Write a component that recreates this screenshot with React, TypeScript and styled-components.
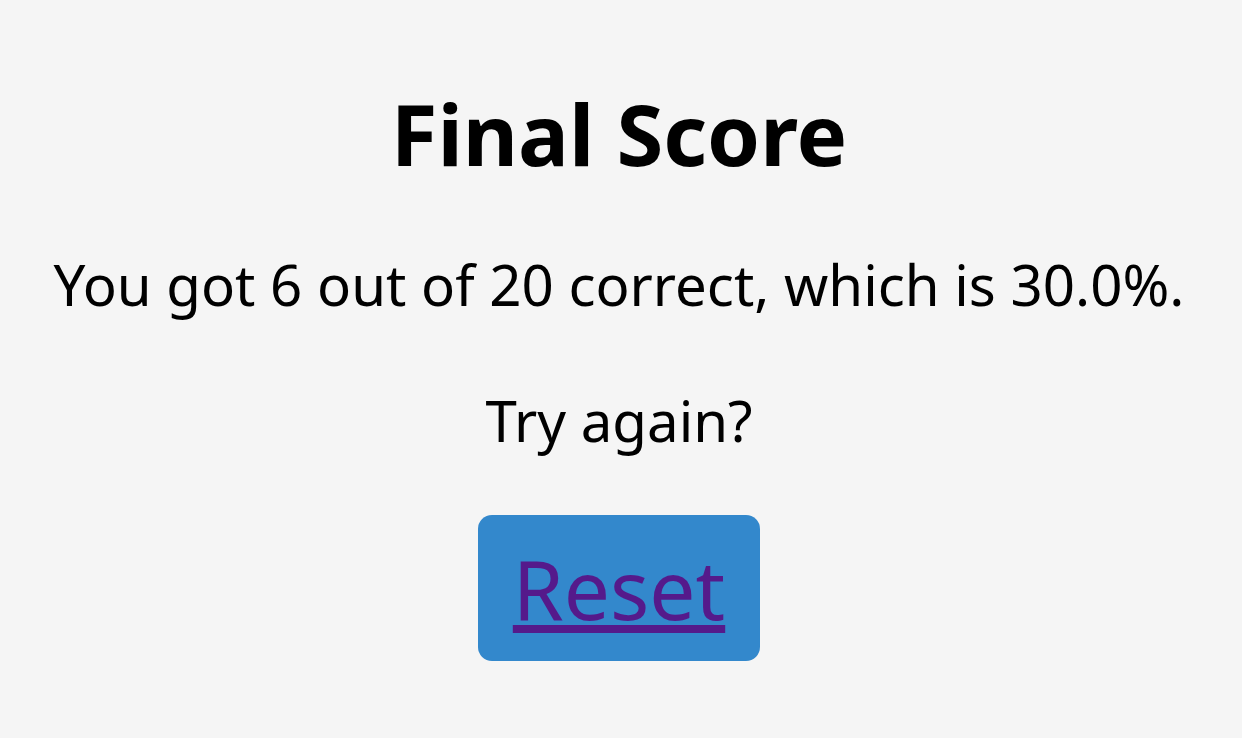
import styled, { createGlobalStyle } from "styled-components";

const GlobalStyle = createGlobalStyle`
  body {
    margin: 0;
    background: #f5f5f5;
    font-family: "Noto Sans", "Open Sans", sans-serif;
    color: #000000;
  }
`;

function App() {
  const correct = 6;
  const total = 20;
  const percent = ((correct / total) * 100).toFixed(1);

  return (
    <>
      <GlobalStyle />
      <ScoreScreen>
        <ScoreTitle>Final Score</ScoreTitle>
        <ScoreText>
          You got {correct} out of {total} correct, which is {percent}%.
        </ScoreText>
        <ScoreText>Try again?</ScoreText>
        <ResetButton>
          <ResetLink href="#">Reset</ResetLink>
        </ResetButton>
      </ScoreScreen>
    </>
  );
}

export default App;

const ScoreScreen = styled.div`
  width: 100%;
  min-height: 100vh;
  display: flex;
  flex-direction: column;
  align-items: center;
  padding: 79px 4px 0 0;
  box-sizing: border-box;
`;

const ScoreTitle = styled.h1`
  margin: 0;
  font-size: 85px;
  font-weight: 700;
  line-height: 108px;
`;

const ScoreText = styled.p`
  margin: 60px 0 0;
  font-size: 56.4px;
  line-height: 76px;
  text-align: center;
  white-space: nowrap;
`;

// blue block around the reset link
const ResetButton = styled.div`
  margin-top: 56px;
  width: 282px;
  height: 146px;
  background: #3388cc;
  border-radius: 14px;
  display: flex;
  align-items: center;
  justify-content: center;
`;

const ResetLink = styled.a`
  font-size: 82px;
  line-height: 100px;
  color: #551a8b;
  text-decoration: underline;
`;
